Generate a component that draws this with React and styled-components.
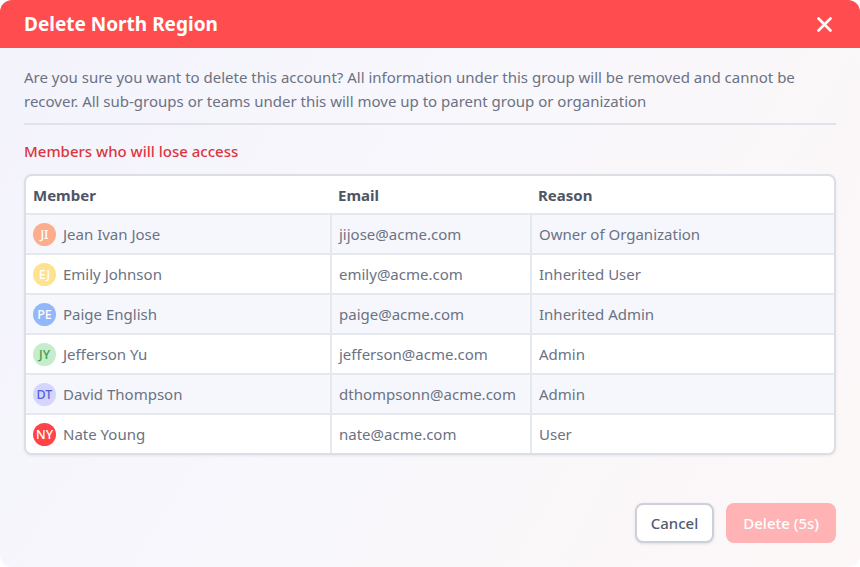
import React from 'react';
import styled, { createGlobalStyle } from 'styled-components';

const Global = createGlobalStyle`
  html, body {
    margin: 0;
    padding: 0;
    background: #ffffff;
  }
  body {
    font-family: "Noto Sans", "Open Sans", sans-serif;
  }
`;

const Dialog = styled.div`
  width: 860px;
  height: 567px;
  border-radius: 12px;
  overflow: hidden;
  display: flex;
  flex-direction: column;
  background: linear-gradient(120deg, #f3f3fc 0%, #f8f7fc 45%, #fdf7f7 100%);
`;

const Header = styled.div`
  height: 48px;
  background: #ff4d4f;
  display: flex;
  align-items: center;
  justify-content: space-between;
  padding: 0 26px 0 24px;
  flex-shrink: 0;
`;

const Title = styled.h1`
  margin: 0;
  font-size: 19px;
  font-weight: 700;
  color: #ffffff;
`;

const CloseButton = styled.button`
  border: none;
  background: none;
  padding: 0;
  width: 20px;
  height: 20px;
  display: flex;
  align-items: center;
  justify-content: center;
  cursor: pointer;
`;

const Body = styled.div`
  flex: 1;
  padding: 17px 24px 24px;
  display: flex;
  flex-direction: column;
`;

const Description = styled.p`
  margin: 0;
  font-size: 15px;
  line-height: 24px;
  color: #6b7283;
  padding-bottom: 10px;
  border-bottom: 2px solid #e1e3ea;
`;

const SectionLabel = styled.div`
  margin-top: 14px;
  font-size: 15px;
  font-weight: 500;
  color: #dc3540;
  line-height: 24px;
`;

const TableWrap = styled.div`
  margin-top: 11px;
  border: 2px solid #dcdee6;
  border-radius: 8px;
  overflow: hidden;
  background: #ffffff;
  box-shadow: 0 1px 3px rgba(30, 35, 60, 0.08);
`;

const Table = styled.table`
  width: 100%;
  border-collapse: collapse;
  font-size: 15px;
  color: #6b7283;
`;

const Th = styled.th`
  text-align: left;
  font-weight: 700;
  color: #4e5565;
  height: 37px;
  padding: 0 7px;
  width: ${p => p.$w || 'auto'};
  border-bottom: 2px solid #e6e8ef;
`;

const Tr = styled.tr`
  background: ${p => (p.$alt ? '#f6f7fc' : '#ffffff')};
  &:not(:last-child) td {
    border-bottom: 2px solid #e6e8ef;
  }
`;

const Td = styled.td`
  height: 38px;
  padding: 0 7px;
  & + & {
    border-left: 2px solid #e6e8ef;
  }
`;

const MemberCell = styled.div`
  display: flex;
  align-items: center;
  gap: 7px;
`;

const Avatar = styled.span`
  width: 23px;
  height: 23px;
  border-radius: 50%;
  background: ${p => p.$bg};
  color: ${p => p.$fg};
  font-size: 12.5px;
  font-weight: 500;
  display: inline-flex;
  align-items: center;
  justify-content: center;
  flex-shrink: 0;
`;

const Footer = styled.div`
  margin-top: auto;
  display: flex;
  justify-content: flex-end;
  gap: 12px;
`;

const Button = styled.button`
  height: 40px;
  padding: 0 ${p => (p.$primary ? '15px' : '14px')};
  border-radius: 8px;
  font-family: inherit;
  font-size: 15px;
  font-weight: 500;
  border: 2px solid ${p => (p.$primary ? '#ffb3b5' : '#cbd0da')};
  background: ${p => (p.$primary ? '#ffb3b5' : '#ffffff')};
  color: ${p => (p.$primary ? '#ffffff' : '#555c6c')};
  box-shadow: ${p => (p.$primary ? 'none' : '0 1px 3px rgba(30,35,60,0.12)')};
  cursor: pointer;
`;

const members = [
  { name: 'Jean Ivan Jose', initials: 'JI', email: 'jijose@acme.com', reason: 'Owner of Organization', bg: '#fdad8c', fg: '#ffffff' },
  { name: 'Emily Johnson', initials: 'EJ', email: 'emily@acme.com', reason: 'Inherited User', bg: '#fee28f', fg: '#ffffff' },
  { name: 'Paige English', initials: 'PE', email: 'paige@acme.com', reason: 'Inherited Admin', bg: '#93b7fb', fg: '#ffffff' },
  { name: 'Jefferson Yu', initials: 'JY', email: 'jefferson@acme.com', reason: 'Admin', bg: '#c5eccb', fg: '#3b9a4c' },
  { name: 'David Thompson', initials: 'DT', email: 'dthompsonn@acme.com', reason: 'Admin', bg: '#d4d6fd', fg: '#5a5fe0' },
  { name: 'Nate Young', initials: 'NY', email: 'nate@acme.com', reason: 'User', bg: '#ff4347', fg: '#ffffff' },
];

export default function App() {
  return (
    <>
      <Global />
      <Dialog>
        <Header>
          <Title>Delete North Region</Title>
          <CloseButton aria-label="Close">
            <svg width="15" height="15" viewBox="0 0 15 15">
              <path d="M1.5 1.5 L13.5 13.5 M13.5 1.5 L1.5 13.5" stroke="#ffffff" strokeWidth="2.6" strokeLinecap="round" />
            </svg>
          </CloseButton>
        </Header>
        <Body>
          <Description>
            Are you sure you want to delete this account? All information under this group will be removed and cannot be
            recover. All sub-groups or teams under this will move up to parent group or organization
          </Description>
          <SectionLabel>Members who will lose access</SectionLabel>
          <TableWrap>
            <Table>
              <thead>
                <tr>
                  <Th $w="291px">Member</Th>
                  <Th $w="186px">Email</Th>
                  <Th>Reason</Th>
                </tr>
              </thead>
              <tbody>
                {members.map((m, i) => (
                  <Tr key={m.email} $alt={i % 2 === 0}>
                    <Td>
                      <MemberCell>
                        <Avatar $bg={m.bg} $fg={m.fg}>{m.initials}</Avatar>
                        {m.name}
                      </MemberCell>
                    </Td>
                    <Td>{m.email}</Td>
                    <Td>{m.reason}</Td>
                  </Tr>
                ))}
              </tbody>
            </Table>
          </TableWrap>
          <Footer>
            <Button>Cancel</Button>
            <Button $primary>Delete (5s)</Button>
          </Footer>
        </Body>
      </Dialog>
    </>
  );
}
